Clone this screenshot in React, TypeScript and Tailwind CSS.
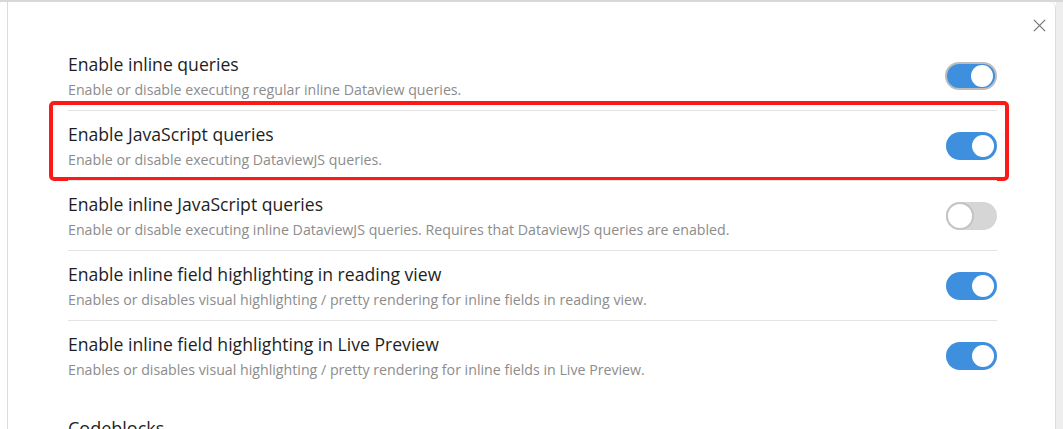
import { FC } from "react";

interface ToggleProps {
  on: boolean;
  focused?: boolean;
}

const Toggle: FC<ToggleProps> = ({ on, focused }) => {
  return (
    <div
      className={
        on
          ? focused
            ? "flex items-center justify-end w-[52px] h-[28px] rounded-full bg-[#3f8fdf] border-[2px] border-[#bdbdbd] px-[2px]"
            : "flex items-center justify-end w-[51px] h-[28px] rounded-full bg-[#3f8fdf] px-[3px]"
          : "flex items-center justify-start w-[51px] h-[28px] rounded-full bg-[#d6d6d6] px-0"
      }
    >
      <div
        className={
          on
            ? "w-[22px] h-[22px] rounded-full bg-white"
            : "w-[28px] h-[28px] rounded-full bg-white border-[2px] border-[#c4c4c4]"
        }
      />
    </div>
  );
};

interface Setting {
  title: string;
  desc: string;
  on: boolean;
  focused?: boolean;
  marked?: boolean;
}

const settings: Setting[] = [
  {
    title: "Enable inline queries",
    desc: "Enable or disable executing regular inline Dataview queries.",
    on: true,
    focused: true,
  },
  {
    title: "Enable JavaScript queries",
    desc: "Enable or disable executing DataviewJS queries.",
    on: true,
    marked: true,
  },
  {
    title: "Enable inline JavaScript queries",
    desc: "Enable or disable executing inline DataviewJS queries. Requires that DataviewJS queries are enabled.",
    on: false,
  },
  {
    title: "Enable inline field highlighting in reading view",
    desc: "Enables or disables visual highlighting / pretty rendering for inline fields in reading view.",
    on: true,
  },
  {
    title: "Enable inline field highlighting in Live Preview",
    desc: "Enables or disables visual highlighting / pretty rendering for inline fields in Live Preview.",
    on: true,
  },
];

const SettingRow: FC<{ item: Setting; first: boolean }> = ({ item, first }) => {
  return (
    <div
      className={
        "relative flex items-center justify-between pt-[11px] pb-[10px] " +
        (first ? "" : "border-t border-[#e3e3e3]")
      }
    >
      <div className="flex flex-col">
        <span className="block text-[17.6px] leading-[24px] text-[#1e1e1e]">
          {item.title}
        </span>
        <span className="block mt-[4px] text-[14.2px] leading-[20px] text-[#8c8c8c]">
          {item.desc}
        </span>
      </div>
      <Toggle on={item.on} focused={item.focused} />
      {item.marked && (
        <div className="absolute left-[-19px] right-[-12px] top-[-10px] bottom-[-1px] border-[4px] border-[#fb1a16] rounded-[5px]" />
      )}
    </div>
  );
};

export default function App() {
  return (
    <div
      className="w-[1063px] h-[429px] overflow-hidden bg-white flex flex-col"
      style={{ fontFamily: '"Open Sans", "Liberation Sans", sans-serif' }}
    >
      <div className="h-[2px] bg-[#d8d8d8] shrink-0" />
      <div className="flex flex-1 min-h-0">
        <div className="w-[7px] shrink-0 bg-white" />
        <div className="relative w-[1049px] shrink-0 border-l border-r border-[#dcdcdc] rounded-tr-[6px] bg-white pl-[60px] pr-[58px] pt-[39px]">
          <button className="absolute right-[6px] top-[13px] w-[20px] h-[20px] flex items-center justify-center text-[#777777]">
            <svg width="15" height="15" viewBox="0 0 16 16" fill="none" stroke="currentColor" strokeWidth="1.4">
              <path d="M2 2 L14 14 M14 2 L2 14" />
            </svg>
          </button>
          {settings.map((s, i) => (
            <SettingRow key={s.title} item={s} first={i === 0} />
          ))}
          <h3 className="mt-[26px] text-[18px] leading-[24px] text-[#1e1e1e]">
            Codeblocks
          </h3>
        </div>
        <div className="flex-1 bg-[#eeeeee]" />
      </div>
    </div>
  );
}
